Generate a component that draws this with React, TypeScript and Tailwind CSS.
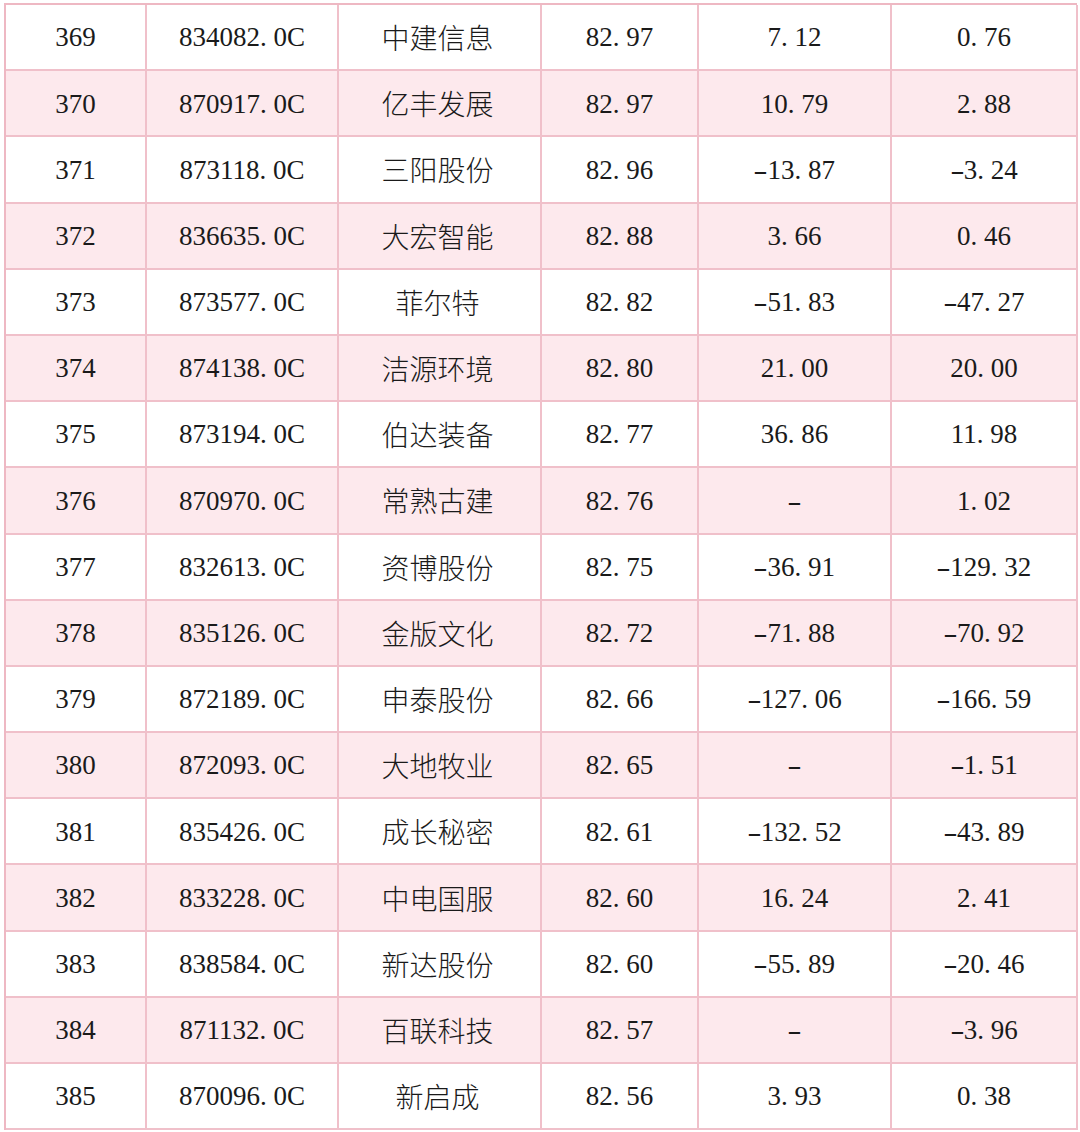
import React from "react";

const rows: [string, string, string, string, string, string][] = [
  ["369", "834082.0C", "中建信息", "82.97", "7.12", "0.76"],
  ["370", "870917.0C", "亿丰发展", "82.97", "10.79", "2.88"],
  ["371", "873118.0C", "三阳股份", "82.96", "-13.87", "-3.24"],
  ["372", "836635.0C", "大宏智能", "82.88", "3.66", "0.46"],
  ["373", "873577.0C", "菲尔特", "82.82", "-51.83", "-47.27"],
  ["374", "874138.0C", "洁源环境", "82.80", "21.00", "20.00"],
  ["375", "873194.0C", "伯达装备", "82.77", "36.86", "11.98"],
  ["376", "870970.0C", "常熟古建", "82.76", "-", "1.02"],
  ["377", "832613.0C", "资博股份", "82.75", "-36.91", "-129.32"],
  ["378", "835126.0C", "金版文化", "82.72", "-71.88", "-70.92"],
  ["379", "872189.0C", "申泰股份", "82.66", "-127.06", "-166.59"],
  ["380", "872093.0C", "大地牧业", "82.65", "-", "-1.51"],
  ["381", "835426.0C", "成长秘密", "82.61", "-132.52", "-43.89"],
  ["382", "833228.0C", "中电国服", "82.60", "16.24", "2.41"],
  ["383", "838584.0C", "新达股份", "82.60", "-55.89", "-20.46"],
  ["384", "871132.0C", "百联科技", "82.57", "-", "-3.96"],
  ["385", "870096.0C", "新启成", "82.56", "3.93", "0.38"],
];

const widths = ["w-[141px]", "w-[192px]", "w-[203px]", "w-[157px]", "w-[193px]", "w-[186px]"];

function Num({ v }: { v: string }) {
  const parts: React.ReactNode[] = [];
  let buf = "";
  let k = 0;
  for (const ch of v) {
    if (ch === ".") {
      if (buf) parts.push(<span key={k++}>{buf}</span>);
      buf = "";
      parts.push(
        <span key={k++} className="inline-block w-[0.5em] text-left">
          {ch}
        </span>
      );
    } else if (ch === "-") {
      if (buf) parts.push(<span key={k++}>{buf}</span>);
      buf = "";
      parts.push(
        <span key={k++} className="inline-block w-[0.5em] text-center">
          <span className="inline-block scale-x-[1.6]">{ch}</span>
        </span>
      );
    } else buf += ch;
  }
  if (buf) parts.push(<span key={k++}>{buf}</span>);
  return <>{parts}</>;
}

export default function App() {
  return (
    <div className="w-[1080px] h-[1132px] bg-white pt-[3px] pl-[4px]">
      <div className="flex flex-col w-[1073px] border-l-2 border-t-2 border-[#eeb8c3]">
        {rows.map((r, i) => (
          <div
            key={i}
            className={`flex h-[66.2px] ${i % 2 === 1 ? "bg-[#fde9ed]" : "bg-white"}`}
          >
            {r.map((c, j) => (
              <div
                key={j}
                className={`${widths[j]} shrink-0 flex items-center justify-center border-r-2 border-b-2 border-[#f0c0ca] text-[#1a1a1a] ${
                  j === 2 ? "text-[28px] pr-[4px]" : "text-[27px] pt-[1px]"
                }`}
                style={{
                  fontFamily:
                    j === 2
                      ? '"Noto Sans CJK SC", sans-serif'
                      : '"Liberation Serif", "Noto Sans CJK SC", serif',
                  fontWeight: j === 2 ? 300 : 400,
                }}
              >
                {j === 2 ? c : <Num v={c} />}
              </div>
            ))}
          </div>
        ))}
      </div>
    </div>
  );
}
